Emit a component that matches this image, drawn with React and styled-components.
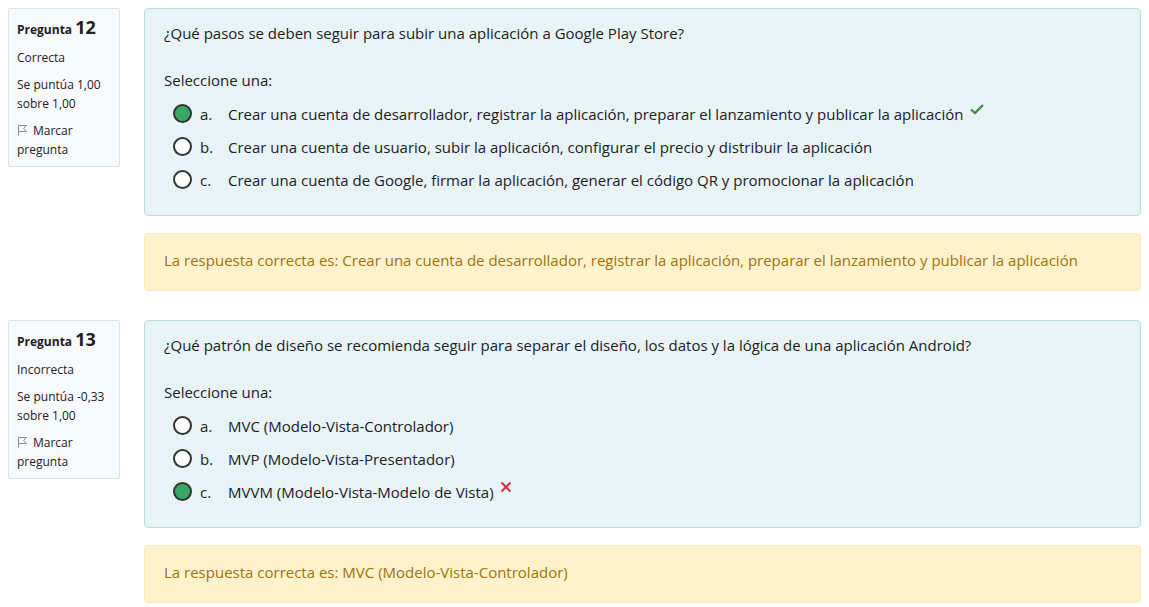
import React from "react";
import styled, { createGlobalStyle } from "styled-components";

const Global = createGlobalStyle`
  html, body { margin: 0; padding: 0; background: #fff; }
  body { font-family: "Open Sans", "Noto Sans", sans-serif; color: #1d2125; }
`;

const Page = styled.div`
  padding: 8px;
  display: flex;
  flex-direction: column;
  gap: 29px;
`;

const Question = styled.div`
  display: flex;
  align-items: flex-start;
  gap: 24px;
`;

const Info = styled.div`
  box-sizing: border-box;
  width: 112px;
  height: 159px;
  flex: none;
  background: #f8f9fa;
  border: 1px solid #dee2e6;
  border-radius: 2px;
  padding: 7px 8px 8px;
  font-size: 12px;
  line-height: 19px;
  color: #1d2125;
`;

const Title = styled.h3`
  margin: 0 0 7px;
  font-size: 12px;
  font-weight: 700;
  line-height: 22px;
  color: #1d2125;
`;

const Num = styled.span`
  font-size: 18px;
  font-weight: 700;
`;

const InfoLine = styled.div`
  margin-bottom: 8px;
`;

const Flag = styled.div`
  display: block;
`;

const Main = styled.div`
  flex: 1;
  display: flex;
  flex-direction: column;
  gap: 17px;
`;

const Formulation = styled.div`
  box-sizing: border-box;
  background: #e7f3f5;
  border: 1px solid #b8dce2;
  border-radius: 4px;
  padding: 13px 19px 0;
  height: 208px;
  font-size: 15px;
  color: #1d2125;
`;

const QText = styled.p`
  margin: 0;
  line-height: 23px;
`;

const Prompt = styled.p`
  margin: 24px 0 5px;
  line-height: 23px;
`;

const Answers = styled.div`
  display: flex;
  flex-direction: column;
`;

const Option = styled.div`
  display: flex;
  align-items: center;
  height: 33px;
  padding-left: 9px;
`;

const Radio = styled.span`
  box-sizing: border-box;
  width: 19px;
  height: 19px;
  border-radius: 50%;
  border: 2px solid #333;
  background: ${(p) => (p.$checked ? "#3aa865" : "#fff")};
  flex: none;
  margin-right: 8px;
`;

const Letter = styled.span`
  width: 28px;
  flex: none;
`;

const Mark = styled.span`
  display: inline-flex;
  align-self: flex-start;
  margin-top: 5px;
  margin-left: 5px;
`;

const Feedback = styled.div`
  box-sizing: border-box;
  height: 58px;
  background: #fef2cc;
  border: 1px solid #fce9b5;
  border-radius: 4px;
  padding: 0 19px 5px;
  display: flex;
  align-items: center;
  font-size: 15px;
  color: #a0730e;
`;

const Check = () => (
  <svg width="16" height="14" viewBox="0 0 16 14">
    <path d="M2 7.5 L6 11 L14 3" fill="none" stroke="#3d8a3a" strokeWidth="2.2" />
  </svg>
);

const Cross = () => (
  <svg width="14" height="14" viewBox="0 0 14 14">
    <path d="M2.5 2.5 L11.5 11.5 M11.5 2.5 L2.5 11.5" fill="none" stroke="#d8334f" strokeWidth="2.2" />
  </svg>
);

const FlagIcon = () => (
  <svg width="12" height="12" viewBox="0 0 12 12" style={{ marginRight: 4, verticalAlign: "-1px" }}>
    <path d="M1.5 1 V11.5 M1.5 1.5 L9.5 1.5 L6.5 4.5 L9.5 7.5 L1.5 7.5" fill="none" stroke="#8a8f94" strokeWidth="1" />
  </svg>
);

const questions = [
  {
    n: 12,
    state: "Correcta",
    grade: "Se puntúa 1,00 sobre 1,00",
    text: "¿Qué pasos se deben seguir para subir una aplicación a Google Play Store?",
    options: [
      "Crear una cuenta de desarrollador, registrar la aplicación, preparar el lanzamiento y publicar la aplicación",
      "Crear una cuenta de usuario, subir la aplicación, configurar el precio y distribuir la aplicación",
      "Crear una cuenta de Google, firmar la aplicación, generar el código QR y promocionar la aplicación",
    ],
    chosen: 0,
    correct: true,
    answer:
      "Crear una cuenta de desarrollador, registrar la aplicación, preparar el lanzamiento y publicar la aplicación",
  },
  {
    n: 13,
    state: "Incorrecta",
    grade: "Se puntúa -0,33 sobre 1,00",
    text: "¿Qué patrón de diseño se recomienda seguir para separar el diseño, los datos y la lógica de una aplicación Android?",
    options: [
      "MVC (Modelo-Vista-Controlador)",
      "MVP (Modelo-Vista-Presentador)",
      "MVVM (Modelo-Vista-Modelo de Vista)",
    ],
    chosen: 2,
    correct: false,
    answer: "MVC (Modelo-Vista-Controlador)",
  },
];

const letters = ["a.", "b.", "c."];

export default function App() {
  return (
    <>
      <Global />
      <Page>
        {questions.map((q) => (
          <Question key={q.n}>
            <Info>
              <Title>
                Pregunta <Num>{q.n}</Num>
              </Title>
              <InfoLine>{q.state}</InfoLine>
              <InfoLine>{q.grade}</InfoLine>
              <Flag>
                <FlagIcon />
                Marcar pregunta
              </Flag>
            </Info>
            <Main>
              <Formulation>
                <QText>{q.text}</QText>
                <Prompt>Seleccione una:</Prompt>
                <Answers>
                  {q.options.map((o, i) => (
                    <Option key={i}>
                      <Radio $checked={i === q.chosen} />
                      <Letter>{letters[i]}</Letter>
                      <span>{o}</span>
                      {i === q.chosen && <Mark>{q.correct ? <Check /> : <Cross />}</Mark>}
                    </Option>
                  ))}
                </Answers>
              </Formulation>
              <Feedback>La respuesta correcta es: {q.answer}</Feedback>
            </Main>
          </Question>
        ))}
      </Page>
    </>
  );
}
